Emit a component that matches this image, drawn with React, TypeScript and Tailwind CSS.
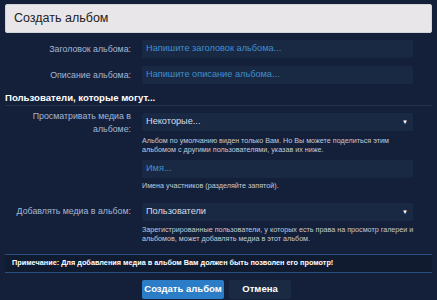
export default function App() {
  const label = 'w-[131px] shrink-0 text-right text-[8.8px] leading-[13px] text-[#a3b8d6]';
  const field = 'w-[271px] h-[18px] bg-[#1a2943] rounded-[2px] px-[4px] flex items-center text-[9.2px]';
  const help = 'text-[7.2px] leading-[9px] text-[#c3cad6]';

  return (
    <div className="w-[437px] h-[300px] bg-[#14203a] overflow-hidden font-['Liberation_Sans',Arial,sans-serif]">
      <div className="pt-[4px] px-[5px]">
        <div className="h-[29px] bg-[#e8e6e9] rounded-[2px] border border-[#cfd3da] flex items-center pl-[8px] text-[12.5px] text-[#222]">
          Создать альбом
        </div>
      </div>

      <div className="flex items-center gap-[11px] mt-[7px]">
        <div className={label}>Заголовок альбома:</div>
        <div className={field}>
          <span className="text-[#3f8fd0]">Напишите заголовок альбома...</span>
        </div>
      </div>

      <div className="flex items-center gap-[11px] mt-[8px]">
        <div className={label}>Описание альбома:</div>
        <div className={field}>
          <span className="text-[#3f8fd0]">Напишите описание альбома...</span>
        </div>
      </div>

      <div className="mx-[5px] mt-[8px] pb-[1px] border-b border-[#22324e] text-[9.6px] leading-[12px] font-bold text-white">
        Пользователи, которые могут...
      </div>

      <div className="flex gap-[11px] mt-[7px]">
        <div className={label + ' -mt-[3px]'}>Просматривать медиа в альбоме:</div>
        <div className="flex flex-col">
          <div className={field + ' justify-between'}>
            <span className="text-[#d6dce6]">Некоторые...</span>
            <span className="text-[6px] text-white mr-[1px]">▼</span>
          </div>
          <div className={help + ' mt-[5px]'}>
            Альбом по умолчанию виден только Вам. Но Вы можете поделиться этим
            <br />
            альбомом с другими пользователями, указав их ниже.
          </div>
          <div className={field + ' mt-[6px]'}>
            <span className="text-[#3f8fd0]">Имя...</span>
          </div>
          <div className={help + ' mt-[3px]'}>Имена участников (разделяйте запятой).</div>
        </div>
      </div>

      <div className="flex gap-[11px] mt-[13px]">
        <div className={label + ' pt-[2px]'}>Добавлять медиа в альбом:</div>
        <div className="flex flex-col">
          <div className={field + ' justify-between'}>
            <span className="text-[#d6dce6]">Пользователи</span>
            <span className="text-[6px] text-white mr-[1px]">▼</span>
          </div>
          <div className={help + ' mt-[4px]'}>
            Зарегистрированные пользователи, у которых есть права на просмотр галереи и
            <br />
            альбомов, может добавлять медиа в этот альбом.
          </div>
        </div>
      </div>

      <div className="mx-[5px] mt-[11px] h-[19px] bg-[#111b30] border-y border-[#2a4f86] flex items-center pl-[7px] text-[7.3px] font-bold text-white">
        Примечание: Для добавления медиа в альбом Вам должен быть позволен его промотр!
      </div>

      <div className="flex gap-[5px] ml-[142px] mt-[7px]">
        <button className="h-[19px] w-[82px] bg-[#2a7dc6] rounded-[2px] text-[9.5px] font-bold text-white">
          Создать альбом
        </button>
        <button className="h-[19px] w-[62px] bg-[#1b2a43] rounded-[2px] text-[9.5px] font-bold text-white">
          Отмена
        </button>
      </div>
    </div>
  );
}
